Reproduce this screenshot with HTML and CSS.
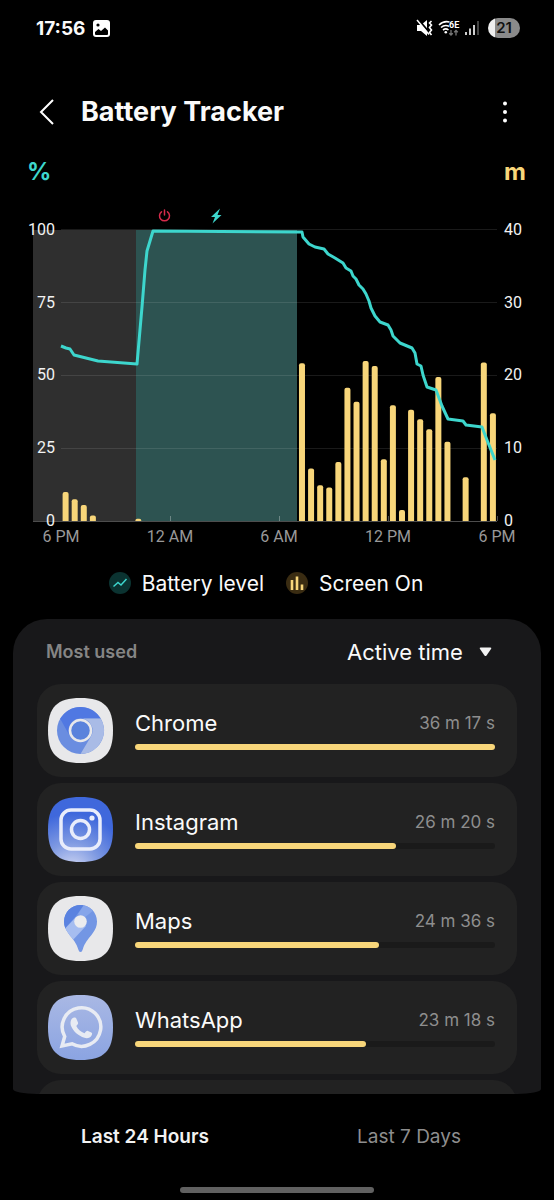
FILE: index.html
```
<!DOCTYPE html>
<html lang="en">
<head>
    <meta charset="UTF-8">
    <meta name="viewport" content="width=device-width, initial-scale=1.0">
    <title>Battery Tracker</title>
    <link rel="stylesheet" href="styles.css">
</head>
<body>

<div class="status-bar">
    <span class="clock">17:56</span>
    <svg class="photo-icon" width="17" height="17" viewBox="0 0 17 17">
        <rect width="17" height="17" rx="3" fill="#fff"/>
        <circle cx="5" cy="5" r="1.6" fill="#000"/>
        <path d="M2 14V12L5.500 9L8 11L12 7.500L15 10.500V14Q15 15 14 15H3Q2 15 2 14Z" fill="#000"/>
    </svg>
    <div class="status-icons">
        <svg width="18" height="18" viewBox="0 0 18 18">
            <path d="M1 6H5L11 1V17L5 12H1Z" fill="#fff"/>
            <path d="M2 0L14 14.500" stroke="#000" stroke-width="2"/>
            <path d="M1 1L13 15.500" stroke="#fff" stroke-width="1.500"/>
            <path d="M15.500 2L13.500 4L15.500 6L13.500 8.500L15.500 11L13.500 13.500L15.500 16" fill="none" stroke="#fff" stroke-width="1.600"/>
        </svg>
        <svg width="22" height="18" viewBox="0 0 22 18">
            <g fill="none" stroke="#fff" stroke-width="1.600">
                <path d="M1 6Q5.500 1.500 11.500 3"/>
                <path d="M3 8.500Q6.500 5.300 11 7.200"/>
                <path d="M5 11Q7.800 8.800 10.500 11"/>
            </g>
            <circle cx="7.800" cy="13.300" r="1.300" fill="#fff"/>
            <text class="wifi-band" x="11" y="9">6E</text>
            <path d="M13 11V16M11.200 14.300L13 16L14.800 14.300M18 16.500V11.500M16.200 13.200L18 11.500L19.800 13.200" fill="none" stroke="#777" stroke-width="1.300"/>
        </svg>
        <svg width="16" height="18" viewBox="0 0 16 18">
            <path d="M2 16V13M6 16V9.500M10 16V6" stroke="#fff" stroke-width="1.600"/>
            <path d="M14 16V2" stroke="#555" stroke-width="1.600"/>
        </svg>
        <span class="battery">21</span>
    </div>
</div>

<header>
    <button class="icon-button" aria-label="Back">
        <svg width="16" height="28" viewBox="0 0 16 28">
            <path d="M14 2L2 14L14 26" fill="none" stroke="#fff" stroke-width="2"/>
        </svg>
    </button>
    <h1>Battery Tracker</h1>
    <button class="icon-button" aria-label="More options">
        <svg width="16" height="28" viewBox="0 0 16 28">
            <g fill="#fff">
                <circle cx="8" cy="5.500" r="2"/>
                <circle cx="8" cy="14" r="2"/>
                <circle cx="8" cy="22.500" r="2"/>
            </g>
        </svg>
    </button>
</header>

<div class="units">
    <span class="unit-percent">%</span>
    <span class="unit-minutes">m</span>
</div>

<svg class="chart" viewBox="0 200 554 350">
    <!-- time asleep and time charging -->
    <rect x="33" y="230" width="103" height="291" fill="#2f2f2f"/>
    <rect x="136" y="230" width="161" height="291" fill="#2d5351"/>
    <path class="grid" d="M61 229.500H497M61 302.500H497M61 375.500H497M61 448.500H497"/>
    <path class="axis" d="M33 521.500H497M170.500 516V521M279.500 516V521M388.500 516V521M497.500 516V521"/>

    <g id="bars"></g>
    <polyline id="level" class="level"/>

    <!-- power off and charger connected -->
    <g fill="none" stroke="#d52b4b" stroke-width="1.500" stroke-linecap="round">
        <path d="M161.500 211.800A5 5 0 1 0 167.500 211.800"/>
        <path d="M164.500 210V215"/>
    </g>
    <path d="M220 208.500L211 217H215L212.500 223.500L221.500 215H217.500Z" fill="#3dd6cd"/>

    <g class="scale scale-left">
        <text x="55" y="235">100</text>
        <text x="55" y="308">75</text>
        <text x="55" y="380">50</text>
        <text x="55" y="453">25</text>
        <text x="55" y="526">0</text>
    </g>
    <g class="scale">
        <text x="504" y="235">40</text>
        <text x="504" y="308">30</text>
        <text x="504" y="380">20</text>
        <text x="504" y="453">10</text>
        <text x="504" y="526">0</text>
    </g>
    <g class="hours">
        <text x="61" y="542">6 PM</text>
        <text x="170" y="542">12 AM</text>
        <text x="279" y="542">6 AM</text>
        <text x="388" y="542">12 PM</text>
        <text x="497" y="542">6 PM</text>
    </g>
</svg>

<div class="legend">
    <svg width="22" height="22" viewBox="0 0 22 22">
        <circle cx="11" cy="11" r="11" fill="#0b3331"/>
        <path d="M4.500 14.500L9 10.500L12 13L17.500 7" fill="none" stroke="#3dd6cd" stroke-width="1.500"/>
    </svg>
    <span>Battery level</span>
    <svg width="22" height="22" viewBox="0 0 22 22">
        <circle cx="11" cy="11" r="11" fill="#3a2c12"/>
        <path d="M6 18V8M11 18V4.500M16 18V12.500" stroke="#f8d67a" stroke-width="2.600"/>
    </svg>
    <span>Screen On</span>
</div>

<main>
    <div class="list-header">
        <h2>Most used</h2>
        <label class="sort">
            <select aria-label="Sort by">
                <option>Active time</option>
            </select>
            <svg width="13" height="10" viewBox="0 0 13 10">
                <path d="M1.500 0.500H11.500Q13 0.500 12 2L7.500 8.500Q6.500 9.500 5.500 8.500L1 2Q0 0.500 1.500 0.500Z" fill="#f2f2f2"/>
            </svg>
        </label>
    </div>

    <ul class="apps">
        <li class="app">
            <svg class="app-icon" viewBox="0 0 65 65">
                <path d="M32.500 0C56 0 65 9 65 32.500S56 65 32.500 65S0 56 0 32.500S9 0 32.500 0Z" fill="#e8e8ea"/>
                <circle cx="32.500" cy="32.500" r="23.500" fill="#6a8de0"/>
                <path d="M32.500 20.500H52.700A23.500 23.500 0 0 0 12.200 20.700L22.100 38.500A12 12 0 0 1 32.500 20.500Z" fill="#5078e2"/>
                <path d="M32.500 20.500H52.700A23.500 23.500 0 0 1 32.500 56L42.900 38.500A12 12 0 0 0 32.500 20.500Z" fill="#a9bbe6"/>
                <circle cx="32.500" cy="32.500" r="10.500" fill="#5a82dc" stroke="#e8e8ea" stroke-width="2.500"/>
            </svg>
            <div class="usage">
                <div class="usage-text"><span class="name">Chrome</span><span class="time">36 m 17 s</span></div>
                <div class="track"><div class="fill" style="width: 100%"></div></div>
            </div>
        </li>
        <li class="app">
            <svg class="app-icon" viewBox="0 0 65 65">
                <defs>
                    <radialGradient id="insta" gradientUnits="userSpaceOnUse" cx="24" cy="74" r="64">
                        <stop offset="0.100" stop-color="#c3cdf0"/>
                        <stop offset="0.450" stop-color="#7f9ae2"/>
                        <stop offset="0.900" stop-color="#3f68dc"/>
                    </radialGradient>
                </defs>
                <path d="M32.500 0C56 0 65 9 65 32.500S56 65 32.500 65S0 56 0 32.500S9 0 32.500 0Z" fill="url(#insta)"/>
                <g fill="none" stroke="#e9edfb" stroke-width="3.500">
                    <rect x="13" y="13" width="39" height="39" rx="10"/>
                    <circle cx="32.500" cy="32.500" r="9"/>
                </g>
                <circle cx="44" cy="21" r="2.600" fill="#e9edfb"/>
            </svg>
            <div class="usage">
                <div class="usage-text"><span class="name">Instagram</span><span class="time">26 m 20 s</span></div>
                <div class="track"><div class="fill" style="width: 72.6%"></div></div>
            </div>
        </li>
        <li class="app">
            <svg class="app-icon" viewBox="0 0 65 65">
                <defs>
                    <clipPath id="pin">
                        <path d="M32.500 56Q31 56 30.300 53.500C28.500 47 25 43.500 20.500 37.500C17.500 33.500 16 30 16 25.500A16.500 16.500 0 0 1 49 25.500C49 30 47.500 33.500 44.500 37.500C40 43.500 36.500 47 34.700 53.500Q34 56 32.500 56Z"/>
                    </clipPath>
                </defs>
                <path d="M32.500 0C56 0 65 9 65 32.500S56 65 32.500 65S0 56 0 32.500S9 0 32.500 0Z" fill="#e8e8ea"/>
                <g clip-path="url(#pin)">
                    <rect width="65" height="65" fill="#7396e4"/>
                    <path d="M10 0H42L28 20L14 36Z" fill="#5a82e0"/>
                    <path d="M38 6L46 14L36 22L30 18Z" fill="#86a5ea"/>
                    <path d="M14 36L28 21L38 30L23 46Z" fill="#a6bdf0"/>
                </g>
                <circle cx="32.500" cy="25.500" r="6.300" fill="#ececee"/>
            </svg>
            <div class="usage">
                <div class="usage-text"><span class="name">Maps</span><span class="time">24 m 36 s</span></div>
                <div class="track"><div class="fill" style="width: 67.8%"></div></div>
            </div>
        </li>
        <li class="app">
            <svg class="app-icon" viewBox="0 0 65 65">
                <defs>
                    <linearGradient id="whats" x1="0" y1="0" x2="0" y2="1">
                        <stop offset="0" stop-color="#a9b8e4"/>
                        <stop offset="1" stop-color="#8ba4e2"/>
                    </linearGradient>
                </defs>
                <path d="M32.500 0C56 0 65 9 65 32.500S56 65 32.500 65S0 56 0 32.500S9 0 32.500 0Z" fill="url(#whats)"/>
                <path d="M14 51L16.700 41.500A19.300 19.300 0 1 1 24 48.800Z" fill="none" stroke="#e8ebf3" stroke-width="3.500"/>
                <path d="M26 22.500C27.500 22.300 28 22.800 28.500 24L30 27.500C30.300 28.500 30 29 28.300 31C30 34.500 33 37 36.500 38.300C38.500 36 39 35.600 40 36L43.300 37.600C44.300 38.200 44.300 38.800 43.800 40C42.500 43 39 43.700 36.500 42.800C30 40.800 25.500 36.300 23.300 31.500C21.800 28 22.500 23.500 26 22.500Z" fill="#e8ebf3"/>
            </svg>
            <div class="usage">
                <div class="usage-text"><span class="name">WhatsApp</span><span class="time">23 m 18 s</span></div>
                <div class="track"><div class="fill" style="width: 64.2%"></div></div>
            </div>
        </li>
        <li class="app"></li>
    </ul>
</main>

<nav>
    <button class="tab active">Last 24 Hours</button>
    <button class="tab">Last 7 Days</button>
</nav>
<div class="home-handle"></div>

<script>
    const LEFT = 61;
    const BOTTOM = 521;
    const STEP = 436.4 / 48; // one bar per half hour

    // Minutes of screen time in each half hour, from 6 PM
    const screenOn = [4, 3, 2.2, 0.75, 0, 0, 0, 0, 0.3, 0, 0, 0, 0, 0, 0, 0, 0, 0, 0, 0, 0, 0, 0, 0, 0, 0,
        21.7, 7.2, 4.9, 4.6, 8.1, 18.3, 16.4, 22, 21.3, 8.5, 15.9, 1.5, 15.3, 14, 12.6, 19.8, 10.9, 0, 6, 0, 21.8, 14.8];

    // Battery level line
    const level = [[61, 346], [66, 348], [70, 349], [74, 355], [86, 358], [98, 361], [137, 364], [142, 307], [145, 270], [147, 251],
        [153, 231], [297, 232], [302, 232], [303, 237], [309, 244], [315, 247], [324, 249], [328, 254], [335, 258], [343, 263],
        [346, 268], [351, 271], [353, 276], [356, 279], [359, 285], [363, 289], [366, 294], [369, 301], [371, 308], [375, 316],
        [380, 322], [388, 325], [391, 330], [393, 336], [400, 343], [412, 348], [415, 353], [417, 364], [421, 366], [423, 375],
        [427, 387], [436, 390], [442, 406], [448, 419], [463, 421], [466, 425], [482, 427], [487, 440], [495, 460]];

    const bars = document.getElementById('bars');
    screenOn.forEach((minutes, i) => {
        if (minutes === 0) return;
        const height = minutes * 291 / 40;
        const r = Math.min(2, height);
        const x = LEFT + i * STEP + 1.6;
        const bar = document.createElementNS('http://www.w3.org/2000/svg', 'path');
        bar.setAttribute('d', `M${x} ${BOTTOM}v${r - height}q0 ${-r} ${r} ${-r}h${6 - 2 * r}q${r} 0 ${r} ${r}V${BOTTOM}Z`);
        bar.setAttribute('class', 'bar');
        bars.appendChild(bar);
    });

    document.getElementById('level').setAttribute('points', level.join(' '));
</script>

</body>
</html>
```

FILE: styles.css
```
* {
    box-sizing: border-box;
}

body {
    margin: 0;
    height: 100vh;
    display: flex;
    flex-direction: column;
    background-color: #000;
    color: #fafafa;
    font-family: Inter, Roboto, sans-serif;
}

button,
select {
    padding: 0;
    border: none;
    background: none;
    color: inherit;
    font: inherit;
    cursor: pointer;
}

svg {
    display: block;
    flex-shrink: 0;
}

/* Status bar */
.status-bar {
    display: flex;
    align-items: center;
    gap: 8px;
    height: 56px;
    padding: 0 34px 0 36px;
}

.clock {
    font-size: 19px;
    font-weight: 700;
}

.status-icons {
    display: flex;
    align-items: center;
    gap: 4px;
    margin-left: auto;
}

.wifi-band {
    fill: #fff;
    font: 700 9px Roboto, sans-serif;
}

.battery {
    width: 32px;
    margin-left: 4px;
    border-radius: 10px;
    background: linear-gradient(to right, #eee 21%, #8a8a8a 21%);
    color: #111;
    font-size: 15px;
    font-weight: 600;
    line-height: 20px;
    text-align: center;
}

/* Title row */
header {
    display: flex;
    align-items: center;
    height: 112px;
    padding: 0 41px 0 39px;
}

h1 {
    flex: 1;
    margin: 0 0 0 26px;
    font-size: 27px;
    font-weight: 700;
    line-height: 32px;
}

.units {
    display: flex;
    justify-content: space-between;
    margin-top: -12px;
    padding: 0 28px 0 27px;
    font-size: 24px;
    font-weight: 700;
    line-height: 32px;
}

.unit-percent {
    color: #3dd6cd;
}

.unit-minutes {
    color: #f8d67a;
}

/* Chart */
.chart {
    width: 100%;
    margin-top: 12px;
}

.grid {
    stroke: #fff;
    stroke-opacity: 0.1;
}

.axis {
    stroke: #fff;
    stroke-opacity: 0.3;
}

.bar {
    fill: #f8d67a;
}

.level {
    fill: none;
    stroke: #3dd6cd;
    stroke-width: 3;
    stroke-linejoin: round;
}

.scale {
    fill: #f2f2f2;
    font: 16px Roboto, sans-serif;
}

.scale-left {
    text-anchor: end;
}

.hours {
    fill: #999;
    font: 16px Roboto, sans-serif;
    text-anchor: middle;
}

.legend {
    display: flex;
    align-items: center;
    justify-content: center;
    gap: 11px;
    height: 66px;
    padding-right: 22px;
    font-size: 21px;
}

.legend span + svg {
    margin-left: 11px;
}

/* App list */
main {
    flex: 1;
    min-height: 0;
    margin: 3px 13px 0;
    padding: 0 24px;
    overflow: hidden;
    border-radius: 34px 34px 24px 24px / 34px 34px 5px 5px;
    background-color: #18181a;
}

.list-header {
    display: flex;
    align-items: center;
    justify-content: space-between;
    height: 65px;
    padding: 0 25px 0 9px;
}

h2 {
    margin: 0;
    color: #858585;
    font-size: 18px;
    font-weight: 600;
}

.sort {
    display: flex;
    align-items: center;
    gap: 16px;
    font-size: 22px;
}

.sort select {
    appearance: none;
}

.apps {
    display: flex;
    flex-direction: column;
    gap: 6px;
    margin: 0;
    padding: 0;
    list-style: none;
}

.app {
    display: flex;
    align-items: center;
    gap: 22px;
    min-height: 93px;
    padding: 0 22px 0 11px;
    border-radius: 24px;
    background-color: #222;
}

.app-icon {
    width: 65px;
    height: 65px;
}

.usage {
    flex: 1;
    padding-bottom: 6px;
}

.usage-text {
    display: flex;
    align-items: center;
    justify-content: space-between;
    height: 34px;
    margin-bottom: 4px;
}

.name {
    font-size: 22px;
}

.time {
    color: #8e8e8e;
    font-size: 17px;
}

.track {
    height: 6px;
    border-radius: 3px;
    background-color: #1a1a1a;
}

.fill {
    height: 6px;
    border-radius: 3px;
    background-color: #f8d67a;
}

/* Bottom tabs */
nav {
    display: grid;
    grid-template-columns: 1fr 1fr;
    height: 84px;
    padding: 0 13px;
}

.tab {
    color: #8e8e8e;
    font-size: 19px;
}

.tab.active {
    color: #f2f2f2;
    font-weight: 600;
}

.home-handle {
    align-self: center;
    width: 35%;
    height: 6px;
    margin: 9px 0 7px;
    border-radius: 3px;
    background-color: #616161;
}
```
